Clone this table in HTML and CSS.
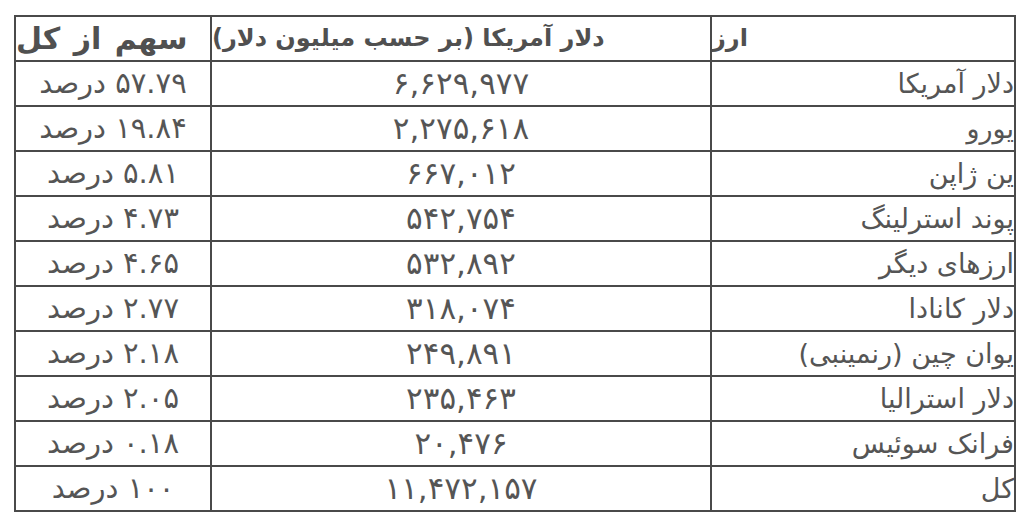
FILE: index.html
```html
<!DOCTYPE html>
<html lang="fa" dir="rtl">
<head>
<meta charset="utf-8">
<link rel="stylesheet" href="styles.css">
</head>
<body>
<table class="currency-table">
  <colgroup>
    <col class="c-name">
    <col class="c-amount">
    <col class="c-share">
  </colgroup>
  <thead>
    <tr>
      <th>ارز</th>
      <th>دلار آمریکا (بر حسب میلیون دلار)</th>
      <th class="wide">سهم از کل</th>
    </tr>
  </thead>
  <tbody>
    <tr><td class="name">دلار آمریکا</td><td class="amount">۶,۶۲۹,۹۷۷</td><td class="share">۵۷.۷۹ درصد</td></tr>
    <tr><td class="name">یورو</td><td class="amount">۲,۲۷۵,۶۱۸</td><td class="share">۱۹.۸۴ درصد</td></tr>
    <tr><td class="name">ین ژاپن</td><td class="amount">۶۶۷,۰۱۲</td><td class="share">۵.۸۱ درصد</td></tr>
    <tr><td class="name">پوند استرلینگ</td><td class="amount">۵۴۲,۷۵۴</td><td class="share">۴.۷۳ درصد</td></tr>
    <tr><td class="name">ارزهای دیگر</td><td class="amount">۵۳۲,۸۹۲</td><td class="share">۴.۶۵ درصد</td></tr>
    <tr><td class="name">دلار کانادا</td><td class="amount">۳۱۸,۰۷۴</td><td class="share">۲.۷۷ درصد</td></tr>
    <tr><td class="name">یوان چین (رنمینبی)</td><td class="amount">۲۴۹,۸۹۱</td><td class="share">۲.۱۸ درصد</td></tr>
    <tr><td class="name">دلار استرالیا</td><td class="amount">۲۳۵,۴۶۳</td><td class="share">۲.۰۵ درصد</td></tr>
    <tr><td class="name">فرانک سوئیس</td><td class="amount">۲۰,۴۷۶</td><td class="share">۰.۱۸ درصد</td></tr>
    <tr><td class="name">کل</td><td class="amount">۱۱,۴۷۲,۱۵۷</td><td class="share">۱۰۰ درصد</td></tr>
  </tbody>
</table>
</body>
</html>
```
FILE: styles.css
```css
html, body {
  margin: 0;
  padding: 0;
  background: #ffffff;
}
body {
  padding: 15px 16px 0 16px;
  font-family: "DejaVu Sans", sans-serif;
  color: #555555;
}
.currency-table {
  width: 1000px;
  border-collapse: collapse;
  table-layout: fixed;
  font-size: 27px;
}
.c-name { width: 304px; }
.c-amount { width: 500px; }
.c-share { width: 196px; }
.currency-table th,
.currency-table td {
  border: 2px solid #4a4a4a;
  padding: 0;
  height: 43px;
  line-height: 43px;
  white-space: nowrap;
  overflow: hidden;
}
.currency-table th {
  text-align: left;
  font-weight: bold;
  font-size: 24px;
  color: #505050;
}
.currency-table th.wide {
  font-size: 30px;
  word-spacing: 3px;
}
.name { text-align: right; }
.amount {
  text-align: center;
  font-size: 31px;
}
.share {
  text-align: center;
  font-size: 29px;
}
```
